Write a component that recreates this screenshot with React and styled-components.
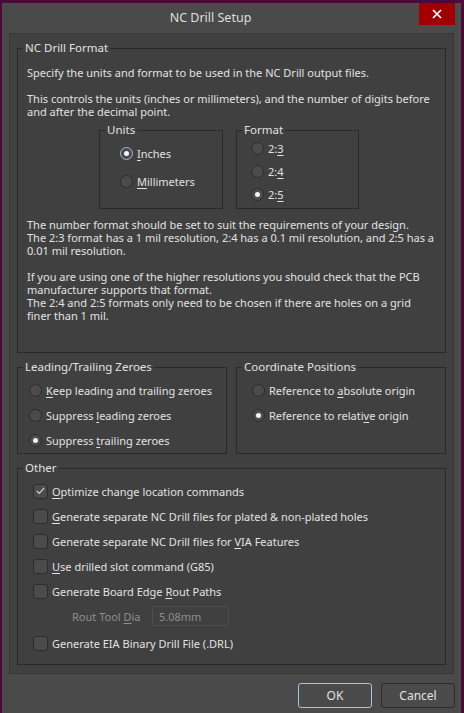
import React from 'react';
import styled, { createGlobalStyle } from 'styled-components';

const GlobalStyle = createGlobalStyle`
  html, body {
    margin: 0;
    padding: 0;
    height: 713px;
    overflow: hidden;
    background: #4c0a3b;
  }
  body {
    font-family: "Noto Sans", "Open Sans", sans-serif;
    font-size: 11px;
    color: #e2e2e2;
  }
`;

const Desktop = styled.div`
  box-sizing: border-box;
  height: 713px;
  padding: 3px 3px 0 2px;
`;

const Window = styled.div`
  height: 100%;
  background: #4a4a4a;
  display: flex;
  flex-direction: column;
`;

const TitleBar = styled.div`
  height: 30px;
  display: flex;
  align-items: flex-start;
  flex-shrink: 0;
`;

const Title = styled.div`
  flex: 1;
  text-align: center;
  line-height: 30px;
  font-size: 12.5px;
  color: #dedede;
`;

const CloseButton = styled.button`
  width: 36px;
  height: 22px;
  margin: 0 6px 0 0;
  padding: 0;
  border: 0;
  background: #a00000;
  display: flex;
  align-items: center;
  justify-content: center;
`;

const Panel = styled.div`
  margin: 0 7px;
  padding: 6px 7px 8px;
  background: #404040;
  border: 1px solid #363636;
  display: flex;
  flex-direction: column;
  gap: 6px;
`;

const Group = styled.fieldset`
  margin: 0;
  padding: 0;
  min-width: 0;
  border: 1px solid #2a2a2a;
  flex: ${p => (p.$grow ? 1 : 'none')};
  width: ${p => p.$width || 'auto'};
  box-sizing: border-box;
`;

const Legend = styled.legend`
  margin-left: 5px;
  padding: 0 2px;
  line-height: 16px;
  font-size: 11.5px;
  color: #e2e2e2;
`;

const GroupBody = styled.div`
  padding: ${p => p.$pad};
  display: flex;
  flex-direction: column;
  gap: ${p => p.$gap || 0}px;
`;

const Paragraph = styled.p`
  margin: 0;
  line-height: 13px;
  white-space: nowrap;
`;

const OptionsRow = styled.div`
  display: flex;
  gap: 13px;
  margin: 4px 0 9px 72px;
`;

const SplitRow = styled.div`
  display: flex;
  gap: 9px;
`;

const OptionRow = styled.label`
  display: flex;
  align-items: center;
  height: 20px;
  gap: 4px;
  white-space: nowrap;
  margin-top: ${p => p.$offset || 0}px;
  color: #e2e2e2;
`;

const RadioDot = styled.span`
  box-sizing: border-box;
  width: 13px;
  height: 13px;
  border-radius: 50%;
  flex-shrink: 0;
  background: #4b4b4b;
  border: 1px solid ${p => (p.$focused ? '#9fbad6' : '#2b2b2b')};
  display: flex;
  align-items: center;
  justify-content: center;

  &::after {
    content: '';
    display: ${p => (p.$checked ? 'block' : 'none')};
    width: 5px;
    height: 5px;
    border-radius: 50%;
    background: #f4f4f4;
  }
`;

const CheckBox = styled.span`
  box-sizing: border-box;
  width: 15px;
  height: 15px;
  border-radius: 3px;
  flex-shrink: 0;
  background: #4b4b4b;
  border: 1px solid #2c2c2c;
  display: flex;
  align-items: center;
  justify-content: center;
`;

const Key = styled.span`
  text-decoration: underline;
  text-underline-offset: 2px;
`;

const RoutRow = styled.div`
  display: flex;
  align-items: center;
  height: 20px;
  margin-left: 39px;
  color: #8e8e8e;
`;

const RoutLabel = styled.span`
  width: 80px;
  white-space: nowrap;
`;

const DiaInput = styled.div`
  box-sizing: border-box;
  width: 77px;
  height: 20px;
  padding-left: 6px;
  border: 1px solid #4e4e4e;
  border-radius: 2px;
  background: #404040;
  display: flex;
  align-items: center;
  color: #8e8e8e;
`;

const Footer = styled.div`
  display: flex;
  justify-content: flex-end;
  gap: 9px;
  padding: 9px 6px 0 0;
`;

const Button = styled.button`
  box-sizing: border-box;
  width: 74px;
  height: 25px;
  padding: 0;
  border-radius: 3px;
  border: 1px solid ${p => (p.$primary ? '#a7c3df' : '#2c2c2c')};
  background: #4a4a4a;
  color: #e2e2e2;
  font-family: inherit;
  font-size: 12px;
`;

const Radio = ({ checked, focused, children }) => (
  <OptionRow>
    <RadioDot $checked={checked} $focused={focused} />
    <span>{children}</span>
  </OptionRow>
);

const Check = ({ checked, offset, children }) => (
  <OptionRow $offset={offset}>
    <CheckBox>
      {checked && (
        <svg width="9" height="8" viewBox="0 0 9 8">
          <polyline points="0.8,4 3.3,6.5 8.2,1" fill="none" stroke="#cfcfcf" strokeWidth="1.2" />
        </svg>
      )}
    </CheckBox>
    <span>{children}</span>
  </OptionRow>
);

export default function App() {
  return (
    <Desktop>
      <GlobalStyle />
      <Window>
        <TitleBar>
          <Title>NC Drill Setup</Title>
          <CloseButton aria-label="Close">
            <svg width="10" height="10" viewBox="0 0 10 10">
              <path d="M1 1 L9 9 M9 1 L1 9" stroke="#ffffff" strokeWidth="1.7" />
            </svg>
          </CloseButton>
        </TitleBar>
        <Panel>
          <Group>
            <Legend>NC Drill Format</Legend>
            <GroupBody $pad="10px 9px 30px 9px">
              <Paragraph>
                Specify the units and format to be used in the NC Drill output files.<br />
                <br />
                This controls the units (inches or millimeters), and the number of digits before<br />
                and after the decimal point.
              </Paragraph>
              <OptionsRow>
                <Group $width="124px">
                  <Legend>Units</Legend>
                  <GroupBody $pad="5px 0 15px 20px" $gap={8}>
                    <Radio checked focused><Key>I</Key>nches</Radio>
                    <Radio><Key>M</Key>illimeters</Radio>
                  </GroupBody>
                </Group>
                <Group $width="123px">
                  <Legend>Format</Legend>
                  <GroupBody $pad="0 0 4px 14px" $gap={3}>
                    <Radio>2:<Key>3</Key></Radio>
                    <Radio>2:<Key>4</Key></Radio>
                    <Radio checked>2:<Key>5</Key></Radio>
                  </GroupBody>
                </Group>
              </OptionsRow>
              <Paragraph>
                The number format should be set to suit the requirements of your design.<br />
                The 2:3 format has a 1 mil resolution, 2:4 has a 0.1 mil resolution, and 2:5 has a<br />
                0.01 mil resolution.<br />
                <br />
                If you are using one of the higher resolutions you should check that the PCB<br />
                manufacturer supports that format.<br />
                The 2:4 and 2:5 formats only need to be chosen if there are holes on a grid<br />
                finer than 1 mil.
              </Paragraph>
            </GroupBody>
          </Group>

          <SplitRow>
            <Group $grow>
              <Legend>Leading/Trailing Zeroes</Legend>
              <GroupBody $pad="5px 0 3px 11px" $gap={5}>
                <Radio><Key>K</Key>eep leading and trailing zeroes</Radio>
                <Radio>Suppress <Key>l</Key>eading zeroes</Radio>
                <Radio checked>Suppress <Key>t</Key>railing zeroes</Radio>
              </GroupBody>
            </Group>
            <Group $grow>
              <Legend>Coordinate Positions</Legend>
              <GroupBody $pad="5px 0 3px 15px" $gap={5}>
                <Radio>Reference to <Key>a</Key>bsolute origin</Radio>
                <Radio checked>Reference to relati<Key>v</Key>e origin</Radio>
              </GroupBody>
            </Group>
          </SplitRow>

          <Group>
            <Legend>Other</Legend>
            <GroupBody $pad="5px 0 11px 15px" $gap={5}>
              <Check checked><Key>O</Key>ptimize change location commands</Check>
              <Check><Key>G</Key>enerate separate NC Drill files for plated &amp; non-plated holes</Check>
              <Check>Generate separate NC Drill files for <Key>V</Key>IA Features</Check>
              <Check><Key>U</Key>se drilled slot command (G85)</Check>
              <Check>Generate Board Edge <Key>R</Key>out Paths</Check>
              <RoutRow>
                <RoutLabel>Rout Tool <Key>D</Key>ia</RoutLabel>
                <DiaInput>5.08mm</DiaInput>
              </RoutRow>
              <Check offset={2}>Generate EIA Binary Drill File (.DRL)</Check>
            </GroupBody>
          </Group>
        </Panel>
        <Footer>
          <Button $primary>OK</Button>
          <Button>Cancel</Button>
        </Footer>
      </Window>
    </Desktop>
  );
}
